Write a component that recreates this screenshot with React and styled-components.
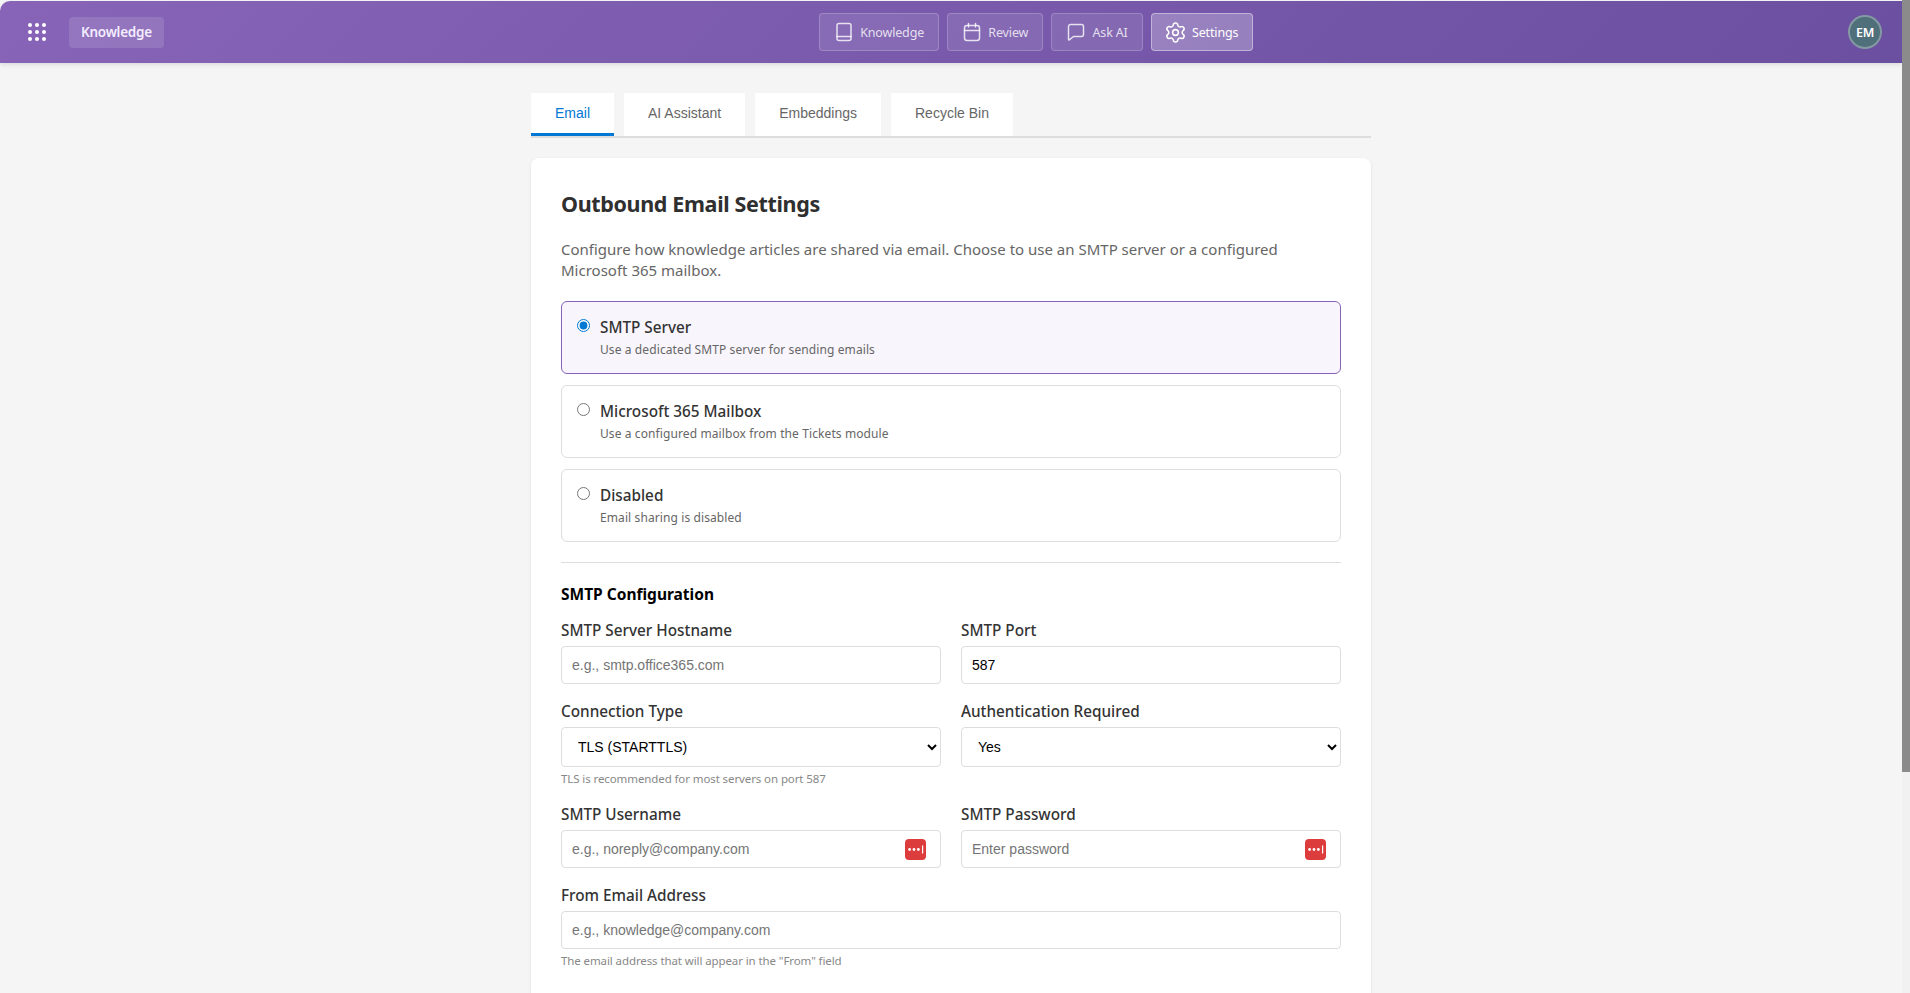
import React from 'react';
import styled, { createGlobalStyle } from 'styled-components';
import { Settings } from 'lucide-react';

const UI_FONT = '"Noto Sans", "Open Sans", sans-serif';
const FIELD_FONT = '"Liberation Sans", Arial, sans-serif';

const GlobalStyle = createGlobalStyle`
  html, body {
    margin: 0;
    height: 100%;
    overflow: hidden;
    background: #f5f5f5;
  }
  * {
    box-sizing: border-box;
  }
`;

const Shell = styled.div`
  display: flex;
  height: 100vh;
  overflow: hidden;
  font-family: ${UI_FONT};
`;

const Page = styled.div`
  flex: 1;
  min-width: 0;
  padding-top: 1px;
  background: #f5f5f5;
`;

const ScrollTrack = styled.aside`
  flex: 0 0 8px;
  background: #f1f1f1;
`;

const ScrollThumb = styled.div`
  height: 772px;
  background: #8b8b8b;
`;

const Header = styled.header`
  display: flex;
  align-items: center;
  height: 62px;
  padding: 0 20px 0 28px;
  background: linear-gradient(135deg, #8764b8 0%, #6b4fa0 100%);
  border-top-left-radius: 10px;
  box-shadow: 0 2px 4px rgba(0, 0, 0, 0.1);
`;

const Waffle = styled.svg`
  width: 18px;
  height: 18px;
  flex: none;
  fill: #fff;
`;

const AppBadge = styled.div`
  display: flex;
  align-items: center;
  height: 31px;
  margin-left: 23px;
  padding: 0 12px;
  border-radius: 4px;
  background: rgba(255, 255, 255, 0.12);
  color: #f3edff;
  font-size: 13.5px;
  font-weight: 600;
  letter-spacing: -0.25px;
`;

const Nav = styled.nav`
  display: flex;
  gap: 8px;
  margin-left: 655px;
`;

const NavButton = styled.div`
  display: flex;
  align-items: center;
  gap: 6.25px;
  height: 38px;
  padding: 0 14px;
  border-radius: 4px;
  border: 1px solid ${(p) => (p.$active ? 'rgba(255,255,255,0.4)' : 'rgba(255,255,255,0.2)')};
  background: ${(p) => (p.$active ? 'rgba(255,255,255,0.25)' : 'rgba(255,255,255,0.1)')};
  color: ${(p) => (p.$active ? '#fff' : 'rgba(255,255,255,0.8)')};
  font-size: 12.5px;
  letter-spacing: -0.15px;
  svg {
    width: 20px;
    height: 20px;
    flex: none;
    fill: none;
    stroke: currentColor;
    stroke-width: 1.5;
    stroke-linecap: round;
    stroke-linejoin: round;
  }
`;

const GearIcon = styled(Settings)`
  && {
    width: 23px;
    height: 23px;
    margin: 0 -1.5px;
    stroke-width: 1.6;
  }
`;

const Avatar = styled.div`
  display: flex;
  align-items: center;
  justify-content: center;
  width: 34px;
  height: 34px;
  margin-left: auto;
  border-radius: 50%;
  border: 2px solid rgba(255, 255, 255, 0.3);
  background: #4f6f7a;
  color: #fff;
  font-size: 12.5px;
  font-weight: 600;
  letter-spacing: -0.3px;
`;

const Main = styled.main`
  width: 840px;
  margin: 0 auto;
  padding-top: 30px;
`;

const Tabs = styled.div`
  display: flex;
  gap: 10px;
  margin-bottom: 20px;
  border-bottom: 2px solid #ddd;
`;

const Tab = styled.div`
  height: 43px;
  padding: 12px 24px 0;
  background: #fff;
  border-bottom: 3px solid ${(p) => (p.$active ? '#0078d4' : 'transparent')};
  color: ${(p) => (p.$active ? '#0078d4' : '#666')};
  font-family: ${FIELD_FONT};
  font-size: 14px;
  line-height: 16px;
`;

const Card = styled.section`
  padding: 30px 30px 30px;
  border-radius: 8px;
  background: #fff;
  box-shadow: 0 1px 3px rgba(0, 0, 0, 0.1);
`;

const Title = styled.h2`
  margin: 0 0 19px;
  color: #2f2f2f;
  font-size: 21.5px;
  line-height: 32px;
  font-weight: 700;
  letter-spacing: -0.35px;
`;

const Intro = styled.p`
  margin: 0 0 20px;
  color: #666;
  font-size: 15px;
  line-height: 21px;
`;

const Options = styled.div`
  display: flex;
  flex-direction: column;
  gap: 11px;
`;

const Option = styled.label`
  display: flex;
  align-items: flex-start;
  gap: 10px;
  height: 73px;
  padding: 15px;
  border-radius: 6px;
  border: 1px solid ${(p) => (p.$selected ? '#8764b8' : '#ddd')};
  background: ${(p) => (p.$selected ? '#f8f5fc' : '#fff')};
`;

const Radio = styled.input`
  flex: none;
  width: 13px;
  height: 13px;
  margin: 2px 0 0;
  accent-color: #0078d4;
`;

const OptionText = styled.div`
  display: flex;
  flex-direction: column;
`;

const OptionName = styled.span`
  color: #333;
  font-size: 15.3px;
  line-height: 20px;
  font-weight: 500;
`;

const OptionNote = styled.span`
  margin-top: 5px;
  color: #666;
  font-size: 12px;
  line-height: 16px;
  letter-spacing: 0.1px;
`;

const Divider = styled.hr`
  height: 1px;
  margin: 20px 0 21px;
  border: 0;
  background: #ddd;
`;

const SectionTitle = styled.h3`
  margin: 0 0 16px;
  color: #000;
  font-size: 15.5px;
  line-height: 20px;
  font-weight: 700;
`;

const Row = styled.div`
  display: grid;
  grid-template-columns: ${(p) => (p.$single ? '1fr' : '1fr 1fr')};
  gap: 20px;
  margin-bottom: 17px;
`;

const Field = styled.div`
  display: flex;
  flex-direction: column;
  min-width: 0;
`;

const Label = styled.label`
  margin-bottom: 6px;
  color: #333;
  font-size: 15.3px;
  line-height: 20px;
  font-weight: 500;
`;

const InputWrap = styled.div`
  position: relative;
`;

const Input = styled.input`
  display: block;
  width: 100%;
  height: 38px;
  padding: 0 10px;
  border: 1px solid #ddd;
  border-radius: 4px;
  background: #fff;
  color: #000;
  font-family: ${FIELD_FONT};
  font-size: 14px;
  &::placeholder {
    color: #757575;
  }
`;

const Select = styled.select`
  display: block;
  width: 100%;
  height: 40px;
  padding: 0 0 0 12px;
  border: 1px solid #ddd;
  border-radius: 4px;
  background: #fff;
  color: #000;
  font-family: ${FIELD_FONT};
  font-size: 14px;
`;

const Hint = styled.div`
  margin-top: 4px;
  color: #888;
  font-size: 11.5px;
  line-height: 16px;
  letter-spacing: -0.1px;
`;

const PasswordBadge = styled.svg`
  position: absolute;
  top: 9px;
  right: 15px;
  width: 21px;
  height: 21px;
`;

const BookIcon = () => (
  <svg viewBox="0 0 20 20">
    <rect x="3" y="1.5" width="14" height="17" rx="2" />
    <path d="M3 14.5h14" />
  </svg>
);

const CalendarIcon = () => (
  <svg viewBox="0 0 20 20">
    <rect x="2.5" y="3.5" width="15" height="15" rx="2.5" />
    <path d="M2.5 8.5h15M6.5 1.5v3.5M13.5 1.5v3.5" />
  </svg>
);

const ChatIcon = () => (
  <svg viewBox="0 0 20 20">
    <path d="M2.5 4.5a2 2 0 0 1 2-2h11a2 2 0 0 1 2 2v8a2 2 0 0 1-2 2H7.5l-4.2 3.4a.5.5 0 0 1-.8-.4z" />
  </svg>
);

const KeyBadge = () => (
  <PasswordBadge viewBox="0 0 21 21">
    <rect width="21" height="21" rx="4" fill="#dc3c3c" />
    <circle cx="4.6" cy="10.5" r="1.4" fill="#fff" />
    <circle cx="9" cy="10.5" r="1.4" fill="#fff" />
    <circle cx="13.4" cy="10.5" r="1.4" fill="#fff" />
    <rect x="17" y="6.5" width="1.2" height="8" fill="#fff" />
  </PasswordBadge>
);

const dots = [2, 9, 16];

const navItems = [
  { name: 'Knowledge', icon: <BookIcon /> },
  { name: 'Review', icon: <CalendarIcon /> },
  { name: 'Ask AI', icon: <ChatIcon /> },
  { name: 'Settings', icon: <GearIcon />, active: true },
];

const tabs = ['Email', 'AI Assistant', 'Embeddings', 'Recycle Bin'];

const options = [
  { name: 'SMTP Server', note: 'Use a dedicated SMTP server for sending emails', selected: true },
  { name: 'Microsoft 365 Mailbox', note: 'Use a configured mailbox from the Tickets module' },
  { name: 'Disabled', note: 'Email sharing is disabled' },
];

export default function App() {
  return (
    <Shell>
      <GlobalStyle />
      <Page>
        <Header>
          <Waffle viewBox="0 0 18 18">
            {dots.map((y) => dots.map((x) => <circle key={`${x}-${y}`} cx={x} cy={y} r="2" />))}
          </Waffle>
          <AppBadge>Knowledge</AppBadge>
          <Nav>
            {navItems.map((item) => (
              <NavButton key={item.name} $active={item.active}>
                {item.icon}
                {item.name}
              </NavButton>
            ))}
          </Nav>
          <Avatar>EM</Avatar>
        </Header>
        <Main>
          <Tabs>
            {tabs.map((tab, i) => (
              <Tab key={tab} $active={i === 0}>{tab}</Tab>
            ))}
          </Tabs>
          <Card>
            <Title>Outbound Email Settings</Title>
            <Intro>
              Configure how knowledge articles are shared via email. Choose to use an SMTP server or a configured
              Microsoft 365 mailbox.
            </Intro>
            <Options>
              {options.map((opt) => (
                <Option key={opt.name} $selected={opt.selected}>
                  <Radio type="radio" name="provider" defaultChecked={opt.selected} />
                  <OptionText>
                    <OptionName>{opt.name}</OptionName>
                    <OptionNote>{opt.note}</OptionNote>
                  </OptionText>
                </Option>
              ))}
            </Options>
            <Divider />
            <SectionTitle>SMTP Configuration</SectionTitle>
            <Row>
              <Field>
                <Label>SMTP Server Hostname</Label>
                <Input placeholder="e.g., smtp.office365.com" />
              </Field>
              <Field>
                <Label>SMTP Port</Label>
                <Input defaultValue="587" />
              </Field>
            </Row>
            <Row>
              <Field>
                <Label>Connection Type</Label>
                <Select defaultValue="tls">
                  <option value="tls">TLS (STARTTLS)</option>
                  <option value="ssl">SSL</option>
                </Select>
                <Hint>TLS is recommended for most servers on port 587</Hint>
              </Field>
              <Field>
                <Label>Authentication Required</Label>
                <Select defaultValue="yes">
                  <option value="yes">Yes</option>
                  <option value="no">No</option>
                </Select>
              </Field>
            </Row>
            <Row>
              <Field>
                <Label>SMTP Username</Label>
                <InputWrap>
                  <Input placeholder="e.g., noreply@company.com" />
                  <KeyBadge />
                </InputWrap>
              </Field>
              <Field>
                <Label>SMTP Password</Label>
                <InputWrap>
                  <Input placeholder="Enter password" />
                  <KeyBadge />
                </InputWrap>
              </Field>
            </Row>
            <Row $single>
              <Field>
                <Label>From Email Address</Label>
                <Input placeholder="e.g., knowledge@company.com" />
                <Hint>The email address that will appear in the "From" field</Hint>
              </Field>
            </Row>
          </Card>
        </Main>
      </Page>
      <ScrollTrack>
        <ScrollThumb />
      </ScrollTrack>
    </Shell>
  );
}
